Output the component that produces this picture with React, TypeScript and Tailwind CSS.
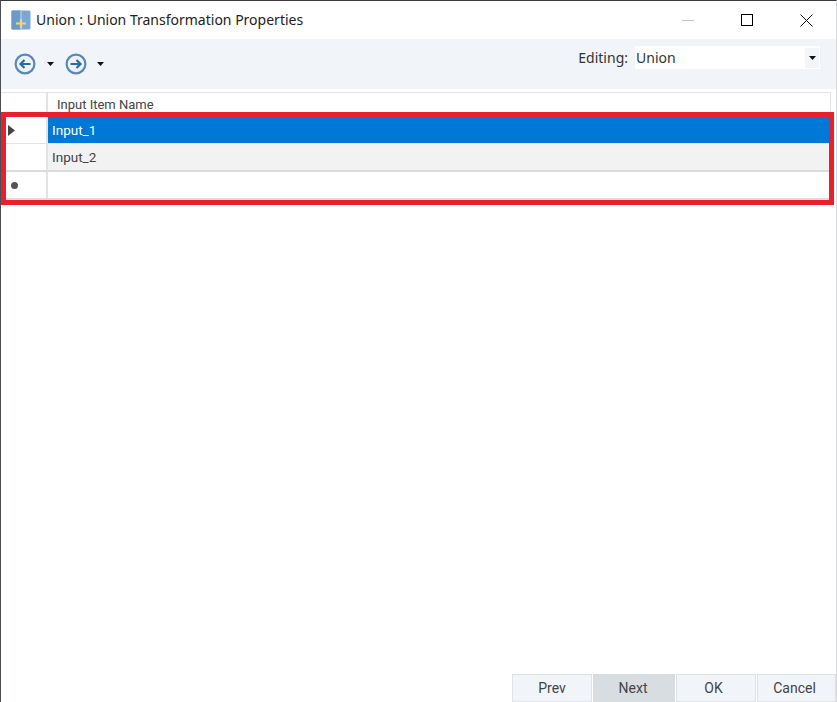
const uiFont = "font-['Roboto','Noto_Sans',sans-serif]"

function AppIcon() {
  return (
    <svg width="20" height="20" viewBox="0 0 20 20">
      <rect x="0.5" y="0.5" width="19" height="19" rx="1.5" fill="#7aa7d4" />
      <rect x="0.5" y="0.5" width="9" height="19" fill="#6a9acb" />
      <path d="M10 1v18" stroke="#c3d6e8" strokeWidth="1" />
      <path d="M10 9v9M5 13.5h10" stroke="#eed670" strokeWidth="2.2" />
    </svg>
  )
}

function NavArrow({ direction }: { direction: 'left' | 'right' }) {
  return (
    <svg width="22" height="22" viewBox="0 0 22 22" fill="none">
      <circle cx="11" cy="11" r="9.4" stroke="#5a88bb" strokeWidth="2.2" fill="#eef3f8" />
      {direction === 'left' ? (
        <path d="M16.5 11H7M10.5 7l-4 4 4 4" stroke="#2f6aa8" strokeWidth="2.2" />
      ) : (
        <path d="M5.5 11H15M11.5 7l4 4-4 4" stroke="#2f6aa8" strokeWidth="2.2" />
      )}
    </svg>
  )
}

function Caret() {
  return (
    <svg width="7" height="4" viewBox="0 0 7 4">
      <path d="M0 0h7L3.5 4z" fill="#111" />
    </svg>
  )
}

export default function App() {
  return (
    <div className={`relative flex h-[702px] w-[837px] flex-col overflow-hidden border-t border-l border-t-[#3c3c3c] border-l-[#4a4f55] border-r border-r-[#d8dadc] bg-white ${uiFont}`}>
      {/* Title bar */}
      <div className="flex h-[38px] shrink-0 items-center pl-[10px]">
        <AppIcon />
        <span className="mb-[2px] ml-[5px] font-['Noto_Sans',sans-serif] text-[14px] text-[#222]">Union : Union Transformation Properties</span>
        <div className="ml-auto flex items-center">
          <div className="mr-[47px] h-px w-3 bg-[#c4c4c4]" />
          <div className="mr-[47px] h-3 w-3 border border-black" />
          <svg className="mr-[23px]" width="13" height="13" viewBox="0 0 13 13">
            <path d="M0.5 0.5l12 12M12.5 0.5l-12 12" stroke="#111" strokeWidth="1" />
          </svg>
        </div>
      </div>

      {/* Toolbar */}
      <div className="flex h-[50px] shrink-0 items-start bg-[#f1f5f9] pl-[13px]">
        <div className="mt-[14px] flex items-center">
          <NavArrow direction="left" />
          <div className="ml-[11px] mr-[11px]"><Caret /></div>
          <NavArrow direction="right" />
          <div className="ml-[10px]"><Caret /></div>
        </div>
        <div className="ml-auto mr-[16px] mt-[7px] flex items-center">
          <span className="font-['Noto_Sans',sans-serif] text-[14px] text-[#333]">Editing:</span>
          <div className="ml-[7px] flex h-[23px] w-[185px] items-center justify-between bg-white pl-[1px] pr-px">
            <span className="font-['Noto_Sans',sans-serif] text-[14px] text-[#333]">Union</span>
            <div className="flex h-[20px] w-[14px] items-center justify-center bg-[#f3f6f9]"><Caret /></div>
          </div>
        </div>
      </div>

      {/* Grid */}
      <div className="mt-[3px] mr-[5px] flex flex-col text-[13px] text-[#444]">
        <div className="flex h-[25px] border-t border-r border-[#e3e3e3]">
          <div className="w-[47px] shrink-0 border-r-2 border-[#e3e3e3]" />
          <div className="flex items-center pl-[9px]">Input Item Name</div>
        </div>
        <div className="flex h-[27px] border-b border-[#e3e3e3]">
          <div className="flex w-[47px] shrink-0 items-center border-r-2 border-[#e3e3e3] pl-[7px]">
            <svg width="7" height="11" viewBox="0 0 7 11"><path d="M0 0l7 5.5L0 11z" fill="#444" /></svg>
          </div>
          <div className="flex flex-1 items-center bg-[#0078d7] pl-[4px] text-[13.5px] text-white">Input_1</div>
        </div>
        <div className="flex h-[28px] border-b-2 border-[#dcdcdc]">
          <div className="w-[47px] shrink-0 border-r-2 border-[#e3e3e3]" />
          <div className="flex flex-1 items-center bg-[#f2f2f2] pl-[4px] pt-px text-[13.5px]">Input_2</div>
        </div>
        <div className="flex h-[28px] border-b-2 border-[#dcdcdc]">
          <div className="flex w-[47px] shrink-0 items-center border-r-2 border-[#e3e3e3] pl-[10px]">
            <div className="h-[7px] w-[7px] rounded-full bg-[#555]" />
          </div>
          <div className="flex-1" />
        </div>
      </div>

      {/* Highlight marking the input rows */}
      <div className="absolute left-0 top-[111px] h-[93px] w-[833px] border-[5px] border-[#e8202b]" />

      {/* Footer buttons */}
      <div className="mt-auto flex h-[28px] justify-end gap-px text-[14px] text-[#444]">
        <div className="flex w-[80px] items-center justify-center border border-[#dfe3e6] bg-[#f1f5f9]">Prev</div>
        <div className="flex w-[82px] items-center justify-center bg-[#d8dde1] pr-[2px]">Next</div>
        <div className="flex w-[80px] items-center justify-center border border-[#dfe3e6] bg-[#f1f5f9] pr-[5px]">OK</div>
        <div className="flex w-[79px] items-center justify-center border border-[#dfe3e6] bg-[#f1f5f9] pr-[4px]">Cancel</div>
      </div>
    </div>
  )
}
